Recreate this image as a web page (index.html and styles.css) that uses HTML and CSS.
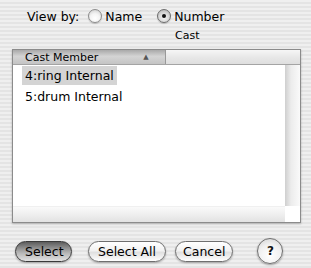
FILE: index.html
```html
<!DOCTYPE html>
<html lang="en">
<head>
  <meta charset="UTF-8" />
  <title>Cast</title>
  <link rel="stylesheet" href="styles.css">
</head>
<body>
  <div class="dialog">
    <div class="view-by">
      <span class="label">View by:</span>
      <label class="radio"><span class="dot"></span>Name</label>
      <label class="radio checked"><span class="dot"></span>Number</label>
    </div>
    <div class="caption">Cast</div>

    <div class="list">
      <div class="list-main">
        <div class="list-head">
          <div class="col sorted">Cast Member <span class="arrow">&#9650;</span></div>
          <div class="col-rest"></div>
        </div>
        <div class="rows">
          <div class="row"><span class="sel">4:ring Internal</span></div>
          <div class="row"><span>5:drum Internal</span></div>
        </div>
        <div class="hbar"></div>
      </div>
      <div class="vside">
        <div class="vhead"></div>
        <div class="vbar"></div>
        <div class="corner"></div>
      </div>
    </div>

    <div class="buttons">
      <button class="btn default">Select</button>
      <button class="btn">Select All</button>
      <button class="btn cancel">Cancel</button>
      <button class="help">?</button>
    </div>
  </div>
</body>
</html>
```

FILE: styles.css
```css
* {
  margin: 0;
  padding: 0;
  box-sizing: border-box;
}

body {
  width: 311px;
  height: 268px;
  overflow: hidden;
  font-family: 'DejaVu Sans', sans-serif;
  font-size: 12.5px;
  color: #000;
  background: repeating-linear-gradient(to bottom, #efefef 0, #efefef 2px, #e4e4e4 2px, #e4e4e4 4px);
}

.dialog {
  display: flex;
  flex-direction: column;
  height: 268px;
}

.view-by {
  display: flex;
  align-items: center;
  height: 16px;
  margin-top: 8px;
  padding-left: 27px;
}

.view-by .label {
  margin-right: 9px;
}

.radio {
  display: flex;
  align-items: center;
  margin-right: 15px;
}

.radio .dot {
  width: 14px;
  height: 14px;
  border-radius: 50%;
  margin-right: 3px;
  border: 1px solid #8c8c8c;
  background: radial-gradient(circle at 50% 70%, #ffffff 0, #f4f4f4 45%, #c8c8c8 100%);
  box-shadow: 0 1px 1px rgba(0, 0, 0, 0.2);
  display: flex;
  align-items: center;
  justify-content: center;
}

.radio.checked .dot {
  background: radial-gradient(circle at 50% 65%, #f2f2f2 0, #d8d8d8 50%, #a8a8a8 100%);
  border-color: #6d6d6d;
}

.radio.checked .dot::after {
  content: '';
  width: 4px;
  height: 4px;
  border-radius: 50%;
  background: #111;
}

.caption {
  font-size: 11px;
  height: 14px;
  margin-top: 5px;
  padding-left: 175px;
}

.list {
  display: flex;
  margin: 6px 10px 0 12px;
  height: 174px;
  border: 1px solid #8b8b8b;
  background: #fff;
  box-shadow: 0 1px 2px rgba(0, 0, 0, 0.25);
}

.list-main {
  flex: 1;
  display: flex;
  flex-direction: column;
}

.list-head {
  display: flex;
  height: 15px;
  border-bottom: 1px solid #a4a4a4;
  font-size: 11px;
}

.col {
  width: 153px;
  display: flex;
  align-items: center;
  padding-left: 12px;
  border-right: 1px solid #999;
  background: linear-gradient(to bottom, #a9a9a9, #d4d4d4 45%, #c4c4c4);
}

.col .arrow {
  font-size: 7px;
  color: #555;
  margin-left: 45px;
}

.col-rest {
  flex: 1;
  background: linear-gradient(to bottom, #f6f6f6, #e8e8e8 50%, #dedede);
}

.rows {
  flex: 1;
}

.row {
  height: 21px;
  display: flex;
  align-items: center;
  padding-left: 9px;
}

.row span {
  padding: 2px 3px;
}

.row .sel {
  background: #d4d4d4;
}

.hbar {
  height: 16px;
  background: linear-gradient(to bottom, #fafafa, #ececec 60%, #e2e2e2);
  border-top: 1px solid #f0f0f0;
}

.vside {
  width: 15px;
  display: flex;
  flex-direction: column;
}

.vhead {
  height: 15px;
  border-bottom: 1px solid #a4a4a4;
  background: linear-gradient(to bottom, #f6f6f6, #e8e8e8 50%, #dedede);
}

.vbar {
  flex: 1;
  background: linear-gradient(to right, #cfcfcf, #ececec 40%, #fafafa);
}

.corner {
  height: 16px;
  background: #fff;
}

.buttons {
  display: flex;
  align-items: center;
  margin-top: 15px;
  padding-left: 15px;
}

.btn {
  font-family: 'DejaVu Sans', sans-serif;
  font-size: 12.5px;
  height: 21px;
  padding: 0 9px;
  border-radius: 11px;
  border: 1px solid #6f6f6f;
  color: #000;
  background: linear-gradient(to bottom, #ffffff, #f2f2f2 45%, #e0e0e0 55%, #ffffff);
  box-shadow: 0 1px 2px rgba(0, 0, 0, 0.3);
  margin-right: 9px;
}

.btn.cancel {
  padding: 0 7px;
}

.btn.default {
  width: 57px;
  border-color: #3a3a3a;
  background: linear-gradient(to bottom, #5c5c5c, #9c9c9c 40%, #b9b9b9 60%, #e2e2e2);
  margin-right: 16px;
}

.help {
  font-family: 'DejaVu Sans', sans-serif;
  font-weight: bold;
  font-size: 12px;
  width: 26px;
  height: 26px;
  border-radius: 50%;
  border: 1px solid #6f6f6f;
  margin-left: 15px;
  background: radial-gradient(circle at 50% 70%, #ffffff, #f0f0f0 55%, #cfcfcf);
  box-shadow: 0 1px 2px rgba(0, 0, 0, 0.35);
  color: #111;
}
```
